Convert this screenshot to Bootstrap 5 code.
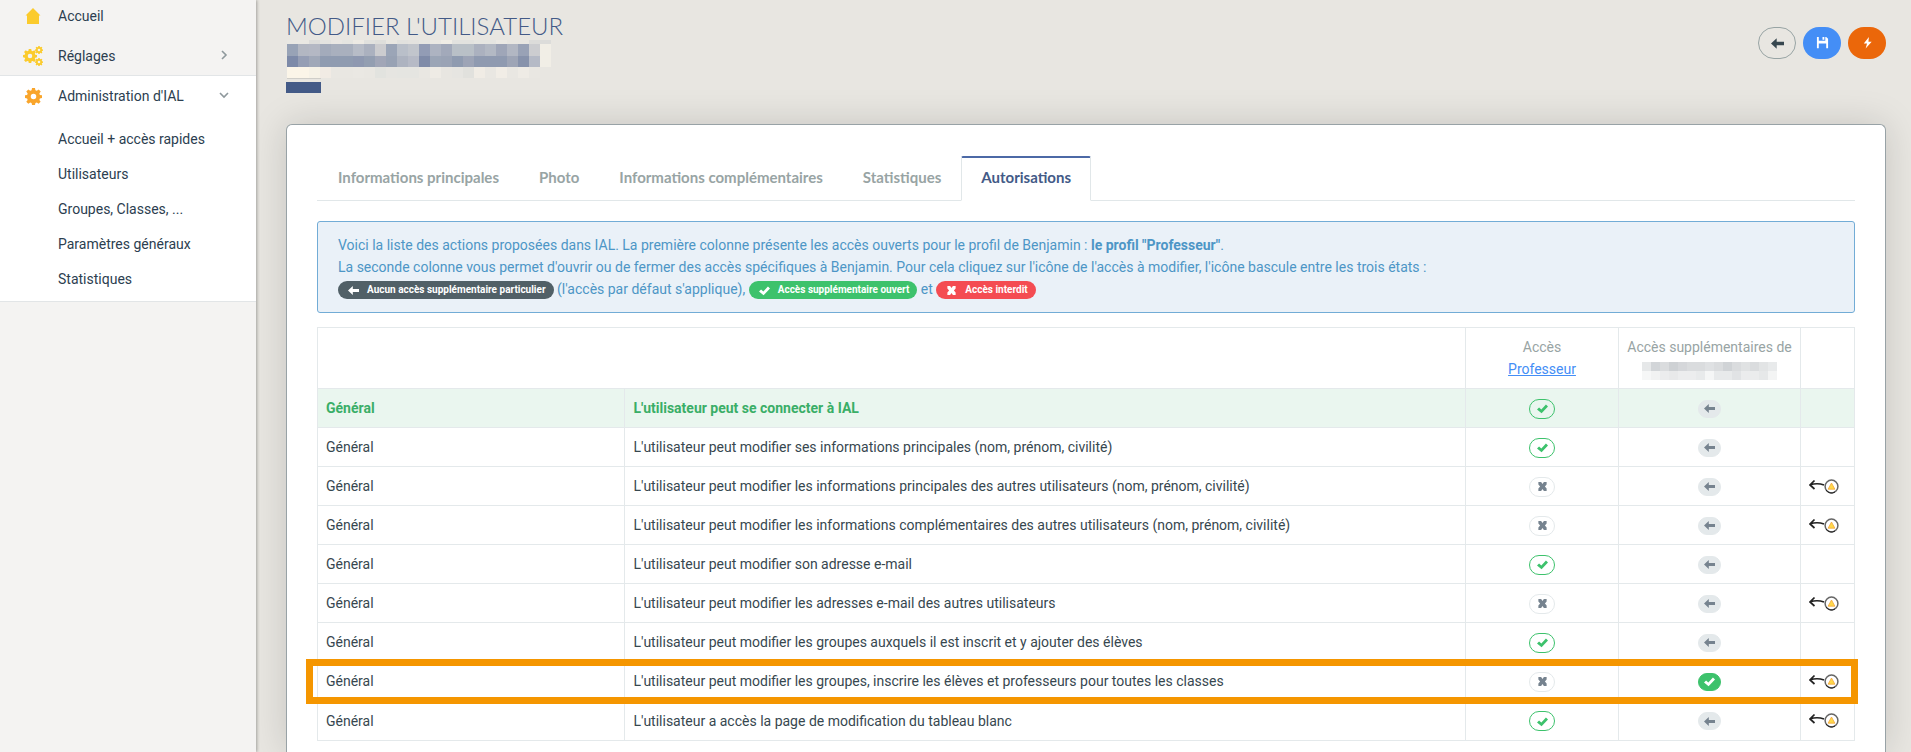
<!DOCTYPE html>
<html lang="fr">
<head>
<meta charset="utf-8">
<meta name="viewport" content="width=device-width, initial-scale=1">
<title>Modifier l'utilisateur</title>
<link href="https://cdn.jsdelivr.net/npm/bootstrap@5.3.0/dist/css/bootstrap.min.css" rel="stylesheet">
<style>
body{font-family:Roboto,"Liberation Sans",sans-serif;font-size:14px;line-height:22px;color:#37474f;background:#e8e6e1}
.icon{width:1em;height:1em;fill:currentColor;display:block;flex:none}
.side{width:256px;flex:none;background:#f4f3f2;box-shadow:1px 0 3px #0000004d;z-index:1}
.side a{color:#2c3e50;text-decoration:none;height:40px;display:flex;align-items:center;padding:0 26px 0 20px}
.side .home{height:36px;padding-bottom:4px}
.side .prefs{height:39px}
.side .ico{width:26px;margin-right:12px;display:flex;justify-content:center;color:#fbcb2d;font-size:16px}
.side .prefs .ico{font-size:20px}
.side .open .ico{color:#f9a52b;font-size:17px}
.side .open{background:#fff;border-block:1px solid #e2e5e7;padding-bottom:5px}
.side .open .sub{height:35px;padding-left:58px}
.side .subs{padding-top:5px}
.side .chev{margin-left:auto;font-size:12px;color:#8e989c;fill:none;stroke:currentColor;stroke-width:1.6}
.main{min-width:0;padding:12px 25px 0 30px}
h1{font-family:Lato,"Open Sans",sans-serif;font-weight:300;font-size:24px;line-height:28px;color:#435a87;margin:0;text-transform:uppercase}
.bar{width:35px;height:11px;background:#435a87}
.tools{gap:7px;padding-top:15px}
.rnd{width:38px;height:32px;border-radius:16px;padding:0;display:flex;align-items:center;justify-content:center;color:#fff;font-size:13px;border:1px solid transparent}
.rnd-back{border-color:#98a4a4;color:#37474f}
.rnd-save{background:#448ef6}
.rnd-go{background:#eb670a}
.panel{border:1px solid #98a2a6;border-bottom:0;border-radius:6px 6px 0 0;background:#fff;box-shadow:0 0 36px #00000026;padding:31px 30px 11px;margin-top:31px}
.tabs{border-bottom:1px solid #e1e7e9;margin-bottom:20px;padding-left:1px}
.tabs .nav-link{font-family:Lato,"Open Sans",sans-serif;font-size:15px;font-weight:700;color:#98a4a4;border:1px solid transparent;border-top:2px solid transparent;border-radius:2px 2px 0 0;padding:8px 19px 12px;margin-bottom:-1px}
.tabs .nav-link.active{color:#435a87;border-color:#4c69a6 #e1e7e9 #fff}
.note{background:#eaf1f8;border:1px solid #72acd6;border-radius:3px;color:#4d96c6;padding:12px 20px;margin-bottom:14px}
.tag{display:inline-flex;align-items:center;height:18px;border-radius:9px;padding:0 8px 0 10px;font-size:10px;line-height:18px;font-weight:700;color:#fff;gap:8px;vertical-align:top;margin-top:3px}
.tag .icon{font-size:11px}
.tag-none{background:#516067}.tag-open{background:#3dc26c}.tag-no{background:#f44c52}
.grid{table-layout:fixed;margin:0;color:#37474f;border-color:#e4e9eb}
.grid th,.grid td{padding:8px;font-weight:400;vertical-align:middle;color:inherit;background:none}
.grid thead th{color:#98a4a4;text-align:center}
.grid thead a{color:#448ef6}
.grid tbody tr{height:39px}
.grid tbody tr:last-child{height:40px}
.c-cat{width:20%}.c-acc{width:153px}.c-sup{width:182px}.c-warn{width:54px}
.grid .first{background:#eaf6ef;color:#3aae67}
.grid .first td:nth-child(-n+2){font-weight:700}
.pill{display:flex;align-items:center;justify-content:center;margin:1px auto 0;padding:0;border:1px solid #e4e9eb;border-radius:10px;width:26px;height:20px;color:#76838f;font-size:11px}
.pill-yes{border-color:#3dc26c;color:#3dc26c}
button.pill{width:23px;height:18px;background:#e4e9eb}
button.pill-on{background:#3dc26c;border-color:#3dc26c;color:#fff}
.warn{display:block;width:30px;height:15px}
.hot{position:relative}
.hot td:first-child::after{content:"";position:absolute;inset:-4px -3px -4px -12px;border:7px solid #f59600;pointer-events:none}
</style>
</head>
<body>
<svg class="d-none" aria-hidden="true">
<symbol id="left" viewBox="0 0 16 16"><path d="M0 8 7 1.500v4.200h9v4.600H7v4.200z"/></symbol>
<symbol id="check" viewBox="0 0 16 16"><path d="M0 9.500 3 6.700l3.300 2.900L13 2 16 5 6.700 15z"/></symbol>
<symbol id="cross" viewBox="0 0 16 16"><path d="M2 1.500h4l2 3 2-3h4v3.500L11.500 8l2.500 3v3.500h-4l-2-3-2 3H2V11l2.500-3L2 5z"/></symbol>
<symbol id="gear" viewBox="0 0 16 16"><path fill-rule="evenodd" d="M6.600 0h2.800l.4 2.100 1.300.6L12.900 1.400l1.900 2-1.300 1.800.5 1.300 2 .3v2.700l-2 .4-.5 1.300 1.200 1.700-1.900 2-1.700-1.300-1.300.5L9.400 16H6.600l-.4-1.900-1.300-.5-1.800 1.300-1.900-2 1.300-1.700L2 9.900l-2-.4V6.800l2-.3.5-1.300-1.300-1.800 1.900-2 1.800 1.300 1.300-.6zM8 5.400a2.600 2.600 0 1 0 0 5.200 2.600 2.600 0 0 0 0-5.200z"/></symbol>
<symbol id="warn" viewBox="0 0 30 15"><path d="M5.500 1.500 1 6l4.500 4M1 6Q8 3.500 15 6" fill="none" stroke="#222" stroke-width="1.700"/><circle cx="22.500" cy="7.500" r="6.400" fill="#fff" stroke="#666" stroke-width="1.500"/><path d="M17 11a6.400 6.400 0 0 0 9 2" fill="none" stroke="#222" stroke-width="1"/><path d="m22.500 4 3.400 6.200h-6.800z" fill="#ffd94a" stroke="#f3a63c" stroke-width=".8"/></symbol>
</svg>
<div class="d-flex min-vh-100">
<nav class="side position-relative">
<a class="home" href="#"><span class="ico"><svg class="icon" viewBox="0 0 16 16"><path d="M8 0 15.500 7.500H14V16H2V7.500H.5z"/></svg></span>Accueil</a>
<a class="prefs" href="#"><span class="ico"><svg class="icon" viewBox="0 0 20 20"><svg y="3" width="14" height="14"><use href="#gear"/></svg><svg x="12" width="8" height="8"><use href="#gear"/></svg><svg x="12" y="12" width="8" height="8"><use href="#gear"/></svg></svg></span>Réglages<svg class="icon chev" viewBox="0 0 12 12"><path d="m4 1 4 4-4 4"/></svg></a>
<div class="open">
<a href="#"><span class="ico"><svg class="icon"><use href="#gear"/></svg></span>Administration d'IAL<svg class="icon chev" viewBox="0 0 12 12"><path d="m2 3 4 4 4-4"/></svg></a>
<div class="subs">
<a class="sub" href="#">Accueil + accès rapides</a>
<a class="sub" href="#">Utilisateurs</a>
<a class="sub" href="#">Groupes, Classes, ...</a>
<a class="sub" href="#">Paramètres généraux</a>
<a class="sub" href="#">Statistiques</a>
</div>
</div>
</nav>
<main class="main flex-grow-1 d-flex flex-column">
<header class="d-flex justify-content-between align-items-start">
<div>
<h1>Modifier l'utilisateur</h1>
<svg class="d-block" width="265" height="42" shape-rendering="crispEdges" aria-hidden="true">
<g id="name-mosaic"></g>
<path d="M1 38h34" stroke="#cfcec9"/>
</svg>
<div class="bar"></div>
</div>
<div class="d-flex tools">
<button class="rnd rnd-back btn" aria-label="Retour"><svg class="icon"><use href="#left"/></svg></button>
<button class="rnd rnd-save btn" aria-label="Enregistrer"><svg class="icon" viewBox="0 0 14 14"><path fill-rule="evenodd" d="M1 0h2v4h7V0h1l2 2v10h-2V7H3v5H1zM7 0h2v3H7z"/></svg></button>
<button class="rnd rnd-go btn" aria-label="Actions"><svg class="icon" viewBox="0 0 14 14"><path d="M8.500 0 3 7h3.500L5 12.500 11.500 5H8z"/></svg></button>
</div>
</header>
<section class="panel flex-grow-1">
<ul class="nav tabs">
<li class="nav-item"><a class="nav-link" href="#">Informations principales</a></li>
<li class="nav-item"><a class="nav-link" href="#">Photo</a></li>
<li class="nav-item"><a class="nav-link" href="#">Informations complémentaires</a></li>
<li class="nav-item"><a class="nav-link" href="#">Statistiques</a></li>
<li class="nav-item"><a class="nav-link active" aria-current="page" href="#">Autorisations</a></li>
</ul>
<div class="note">Voici la liste des actions proposées dans IAL. La première colonne présente les accès ouverts pour le profil de Benjamin : <b>le profil "Professeur"</b>.<br>
La seconde colonne vous permet d'ouvrir ou de fermer des accès spécifiques à Benjamin. Pour cela cliquez sur l'icône de l'accès à modifier, l'icône bascule entre les trois états :<br>
<span class="tag tag-none"><svg class="icon"><use href="#left"/></svg>Aucun accès supplémentaire particulier</span> (l'accès par défaut s'applique), <span class="tag tag-open"><svg class="icon"><use href="#check"/></svg>Accès supplémentaire ouvert</span> et <span class="tag tag-no"><svg class="icon"><use href="#cross"/></svg>Accès interdit</span></div>
<table class="table table-bordered grid">
<colgroup><col class="c-cat"><col><col class="c-acc"><col class="c-sup"><col class="c-warn"></colgroup>
<thead><tr><th colspan="2"></th><th>Accès<br><a href="#">Professeur</a></th><th class="text-nowrap">Accès supplémentaires de<svg class="d-block mx-auto" width="135" height="22" shape-rendering="crispEdges" aria-hidden="true"><g id="head-mosaic"></g></svg></th><th></th></tr></thead>
<tbody>
<tr class="first"><td>Général</td><td>L'utilisateur peut se connecter à IAL</td><td><span class="pill pill-yes"><svg class="icon"><use href="#check"/></svg></span></td><td><button class="pill" aria-label="Par défaut"><svg class="icon"><use href="#left"/></svg></button></td><td></td></tr>
<tr><td>Général</td><td>L'utilisateur peut modifier ses informations principales (nom, prénom, civilité)</td><td><span class="pill pill-yes"><svg class="icon"><use href="#check"/></svg></span></td><td><button class="pill" aria-label="Par défaut"><svg class="icon"><use href="#left"/></svg></button></td><td></td></tr>
<tr><td>Général</td><td>L'utilisateur peut modifier les informations principales des autres utilisateurs (nom, prénom, civilité)</td><td><span class="pill"><svg class="icon"><use href="#cross"/></svg></span></td><td><button class="pill" aria-label="Par défaut"><svg class="icon"><use href="#left"/></svg></button></td><td><svg class="warn"><use href="#warn"/></svg></td></tr>
<tr><td>Général</td><td>L'utilisateur peut modifier les informations complémentaires des autres utilisateurs (nom, prénom, civilité)</td><td><span class="pill"><svg class="icon"><use href="#cross"/></svg></span></td><td><button class="pill" aria-label="Par défaut"><svg class="icon"><use href="#left"/></svg></button></td><td><svg class="warn"><use href="#warn"/></svg></td></tr>
<tr><td>Général</td><td>L'utilisateur peut modifier son adresse e-mail</td><td><span class="pill pill-yes"><svg class="icon"><use href="#check"/></svg></span></td><td><button class="pill" aria-label="Par défaut"><svg class="icon"><use href="#left"/></svg></button></td><td></td></tr>
<tr><td>Général</td><td>L'utilisateur peut modifier les adresses e-mail des autres utilisateurs</td><td><span class="pill"><svg class="icon"><use href="#cross"/></svg></span></td><td><button class="pill" aria-label="Par défaut"><svg class="icon"><use href="#left"/></svg></button></td><td><svg class="warn"><use href="#warn"/></svg></td></tr>
<tr><td>Général</td><td>L'utilisateur peut modifier les groupes auxquels il est inscrit et y ajouter des élèves</td><td><span class="pill pill-yes"><svg class="icon"><use href="#check"/></svg></span></td><td><button class="pill" aria-label="Par défaut"><svg class="icon"><use href="#left"/></svg></button></td><td></td></tr>
<tr class="hot"><td>Général</td><td>L'utilisateur peut modifier les groupes, inscrire les élèves et professeurs pour toutes les classes</td><td><span class="pill"><svg class="icon"><use href="#cross"/></svg></span></td><td><button class="pill pill-on" aria-label="Accès ouvert"><svg class="icon"><use href="#check"/></svg></button></td><td><svg class="warn"><use href="#warn"/></svg></td></tr>
<tr><td>Général</td><td>L'utilisateur a accès la page de modification du tableau blanc</td><td><span class="pill pill-yes"><svg class="icon"><use href="#check"/></svg></span></td><td><button class="pill" aria-label="Par défaut"><svg class="icon"><use href="#left"/></svg></button></td><td><svg class="warn"><use href="#warn"/></svg></td></tr>
</tbody>
</table>
</section>
</main>
</div>
<script src="https://cdn.jsdelivr.net/npm/bootstrap@5.3.0/dist/js/bootstrap.bundle.min.js"></script>
<script>
// Masked names: each row is [y, height, cell colours]
function mosaic(id, x0, size, rows) {
  document.getElementById(id).innerHTML = rows.map(([y, h, cells]) =>
    cells.split(' ').map((c, i) => `<rect x="${x0 + i * size}" y="${y}" width="${size}" height="${h}" fill="#${c}"/>`).join('')).join('');
}
mosaic('name-mosaic', 1, 11, [
  [0, 4, 'e9e8e3 e9e8e3 dddddb e3e3e0 e9e7e3 e5e5e1 edeae4 e1e1de dededb e8e6e1 e1e1de e3e2df e5e5e1 eae8e3 f0ede6 e2e2df e2e2df e5e5e1 e5e5e1 ebe9e4 e8e6e1 e8e6e1 dcdcda dcdcda'],
  [4, 12, '98a3b6 b2b7c2 b4b8c4 a3abbb a9b0be a9b0be b7bcc7 abb1bf cccccf 9ba5b7 b9bfc9 c1c5cc 929cb5 adb3c1 a2a9ba b9c0c7 b9c0c7 abb1bf b3b9c4 9fa6b8 b2b7c3 99a2b6 cccdd0 f1eee6'],
  [16, 11, '7d8aa8 959eb4 a0a8b8 8f9bb0 8f9bb0 8f9bb0 8e98b0 939eb1 a1a6b7 98a2b4 adb3c0 b6bac6 7f8ba8 9ba5b6 9aa3b5 8f9bb0 9da4b6 8f9ab0 8f9ab0 8f9ab0 9ea5b6 8792ab b5bac6 f1eee6'],
  [27, 11, 'fbf5e8 fbf5e8 f6f2e7 f1ebe4 e9e7e2 e9e7e2 eae8e3 e9e7e2 e2e3df e6e5e1 e5e5e1 e5e5e1 e9e7e2 eeebe5 e8e6e1 e6e5e1 e1e1dd f0ece5 e9e7e2 f1ede6 e9e7e2 eeebe5 e9e7e2']
]);
mosaic('head-mosaic', 0, 9, [
  [4, 9, 'e6e8e9 d2d5d8 dadcde ced1d4 d5d7da dadcde dadcde dfe1e3 dadcde d0d3d6 dadcde e0e2e3 dadcde e2e4e5 e8eaeb'],
  [13, 9, 'f6f7f7 f1f2f2 ebeced e8e9ea ecedee ecedee e8eaeb f5f6f6 e8eaeb e8eaeb e1e3e5 ebeced ebeced e6e8e9 f3f4f4']
]);
</script>
</body>
</html>
